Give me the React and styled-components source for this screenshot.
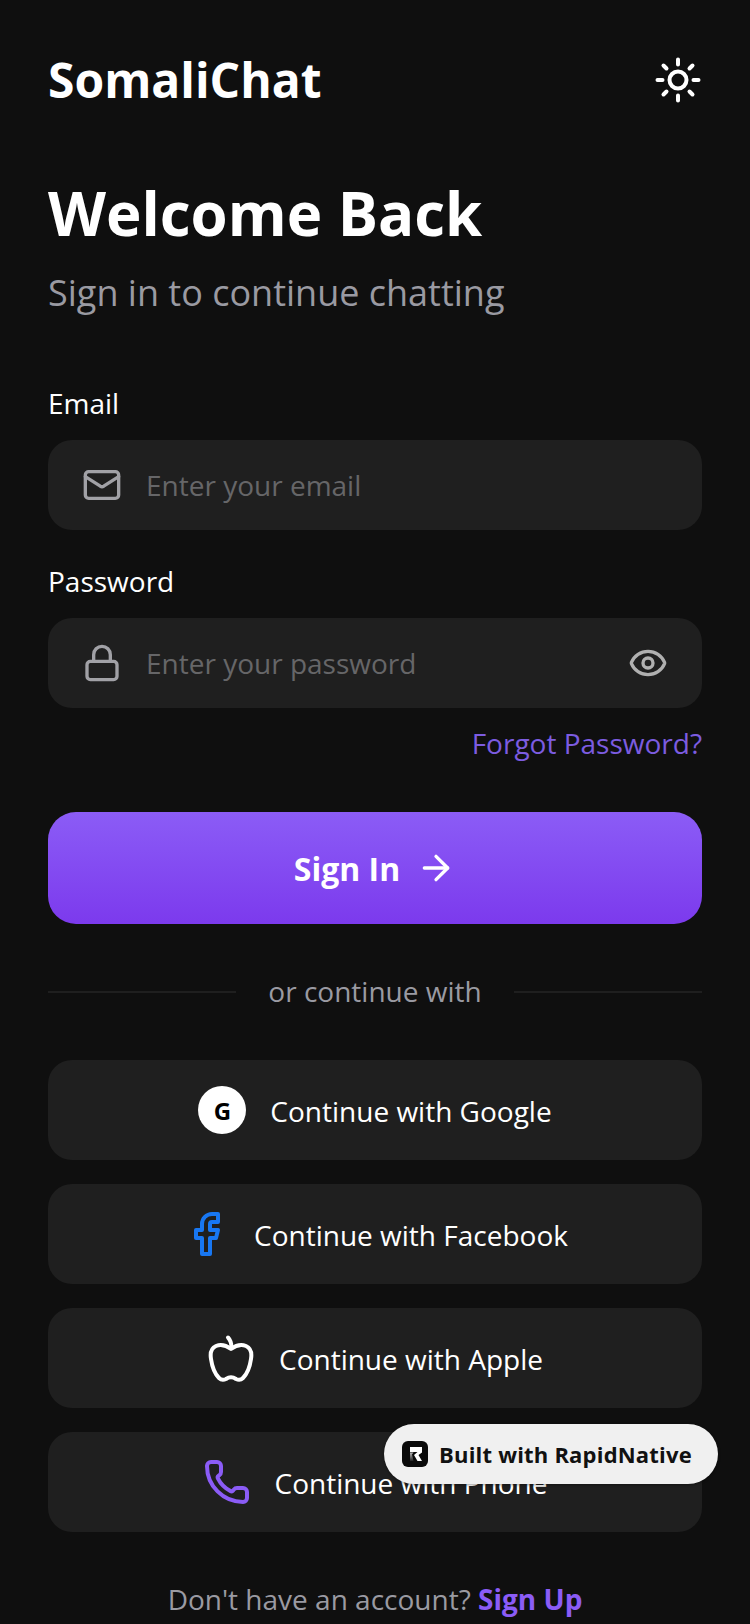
import React from 'react';
import styled, { createGlobalStyle } from 'styled-components';
import { Mail, Lock, Eye, ArrowRight, Facebook, Phone } from 'lucide-react';

const GlobalStyle = createGlobalStyle`
  html, body {
    margin: 0;
    padding: 0;
    background: #0f0f0f;
    font-family: "Open Sans", "Liberation Sans", sans-serif;
  }
  * { box-sizing: border-box; }
`;

const Screen = styled.div`
  position: relative;
  width: 750px;
  height: 1624px;
  overflow: hidden;
  padding: 48px 48px 0;
  background: #0f0f0f;
  color: #fff;
`;

const Header = styled.header`
  display: flex;
  align-items: center;
  justify-content: space-between;
  height: 64px;
  margin-bottom: 63px;
`;

const Logo = styled.div`
  font-size: 48px;
  line-height: 64px;
  font-weight: 700;
`;

const ThemeToggle = styled.button`
  display: flex;
  padding: 0;
  border: 0;
  background: none;
  color: #fff;
`;

const Title = styled.h1`
  margin: 0;
  font-size: 60px;
  line-height: 76px;
  font-weight: 700;
`;

const Subtitle = styled.p`
  margin: 18px 0 67px;
  font-size: 36px;
  line-height: 48px;
  color: #9a9aa2;
`;

const Label = styled.label`
  display: block;
  margin-bottom: 18px;
  font-size: 28px;
  line-height: 38px;
`;

const Field = styled.div`
  display: flex;
  align-items: center;
  gap: 24px;
  height: 90px;
  margin-bottom: 32px;
  padding: 0 34px;
  border-radius: 24px;
  background: #1f1f1f;
  color: #a1a1a6;
`;

const Input = styled.input`
  flex: 1;
  min-width: 0;
  padding: 0;
  border: 0;
  outline: 0;
  background: none;
  font: inherit;
  font-size: 28px;
  color: #fff;

  &::placeholder {
    color: #666668;
    opacity: 1;
  }
`;

const ForgotLink = styled.a`
  display: block;
  margin-top: -16px;
  font-size: 28px;
  line-height: 38px;
  text-align: right;
  color: #7c5ce0;
`;

const SignInButton = styled.button`
  display: flex;
  align-items: center;
  justify-content: center;
  gap: 16px;
  width: 100%;
  height: 112px;
  margin-top: 50px;
  border: 0;
  border-radius: 28px;
  background: linear-gradient(180deg, #8b5cf6, #7c3aed);
  font: inherit;
  font-size: 32px;
  font-weight: 700;
  color: #fff;
`;

const Divider = styled.div`
  display: flex;
  align-items: center;
  gap: 32px;
  margin: 48px 0 50px;
  font-size: 28px;
  line-height: 38px;
  color: #9a9aa2;

  &::before, &::after {
    content: "";
    flex: 1;
    height: 2px;
    margin-top: 2px;
    background: #1f1f1f;
  }
`;

const SocialList = styled.div`
  display: flex;
  flex-direction: column;
  gap: 24px;
`;

const SocialButton = styled.button`
  display: flex;
  align-items: center;
  justify-content: center;
  gap: 24px;
  width: 100%;
  height: 100px;
  padding: 0;
  border: 0;
  border-radius: 24px;
  background: #1f1f1f;
  font: inherit;
  font-size: 28px;
  color: #fff;
`;

const SocialLabel = styled.span`
  margin-top: 2px;
`;

const GoogleMark = styled.span`
  display: flex;
  align-items: center;
  justify-content: center;
  width: 48px;
  height: 48px;
  border-radius: 50%;
  background: #fff;
  font-size: 24px;
  font-weight: 700;
  color: #000;
`;

const Footer = styled.p`
  margin: 48px 0 0;
  font-size: 28px;
  line-height: 38px;
  text-align: center;
  color: #9a9aa2;
`;

const SignUp = styled.a`
  font-weight: 700;
  color: #8b5cf6;
`;

const Badge = styled.div`
  position: absolute;
  left: 384px;
  top: 1424px;
  display: flex;
  align-items: center;
  gap: 11px;
  width: 334px;
  height: 60px;
  padding: 0 18px;
  border-radius: 30px;
  background: #f0f0f0;
  box-shadow: 0 1px 3px rgba(0, 0, 0, 0.4);
  font-size: 22px;
  letter-spacing: 0.2px;
  font-weight: 700;
  color: #111;
`;

const SunIcon = () => (
  <svg width="48" height="48" viewBox="0 0 48 48" fill="none" stroke="currentColor" strokeWidth="4" strokeLinecap="round">
    <circle cx="24" cy="24" r="8.5" />
    <path d="M24 3.5v5M24 39.5v5M3.5 24h5M39.5 24h5M9.5 9.5l3 3M35.5 35.5l3 3M9.5 38.5l3-3M35.5 12.5l3-3" />
  </svg>
);

const RapidLogo = () => (
  <svg width="26" height="26" viewBox="0 0 26 26">
    <defs>
      <linearGradient id="rapidFade" x1="0" y1="0" x2="0" y2="1">
        <stop offset="0" stopColor="#bbb" />
        <stop offset="1" stopColor="#222" />
      </linearGradient>
    </defs>
    <rect width="26" height="26" rx="6" fill="#0a0a0a" />
    <path d="M8 6h12v5.500l-3.500 2.500 3.500 6h-4.500l-3.500-6 3.500-3H8z" fill="#fff" />
    <path d="M8 11.500h3.500l-1.500 2 1.500 6.500H8z" fill="url(#rapidFade)" />
  </svg>
);

const AppleIcon = () => (
  <svg width="48" height="48" viewBox="0 0 48 48" fill="none" stroke="#fff" strokeWidth="4" strokeLinecap="round" strokeLinejoin="round">
    <path d="M24 15C20 12 14 10 9 12C4.500 14 3 19 4 25C5 32 8 40 12 44C14 46 17 46 19 45C22 43 26 43 29 45C31 46 34 46 36 44C40 40 43 32 44 25C45 19 43.500 14 39 12C34 10 28 12 24 15Z" />
    <path d="M24.500 14C24.500 9 23.500 6 21 3.500" />
  </svg>
);

const socials = [
  { label: 'Continue with Google', icon: <GoogleMark>G</GoogleMark> },
  { label: 'Continue with Facebook', icon: <Facebook size={48} color="#1877f2" /> },
  { label: 'Continue with Apple', icon: <AppleIcon /> },
  { label: 'Continue with Phone', icon: <Phone size={48} color="#8b5cf6" /> },
];

export default function App() {
  return (
    <>
      <GlobalStyle />
      <Screen>
        <Header>
          <Logo>SomaliChat</Logo>
          <ThemeToggle><SunIcon /></ThemeToggle>
        </Header>

        <Title>Welcome Back</Title>
        <Subtitle>Sign in to continue chatting</Subtitle>

        <Label>Email</Label>
        <Field>
          <Mail size={40} />
          <Input placeholder="Enter your email" />
        </Field>

        <Label>Password</Label>
        <Field>
          <Lock size={40} />
          <Input placeholder="Enter your password" />
          <Eye size={40} color="#b0b0b0" />
        </Field>
        <ForgotLink>Forgot Password?</ForgotLink>

        <SignInButton>
          Sign In
          <ArrowRight size={40} />
        </SignInButton>

        <Divider>or continue with</Divider>

        <SocialList>
          {socials.map(item => (
            <SocialButton key={item.label}>
              {item.icon}
              <SocialLabel>{item.label}</SocialLabel>
            </SocialButton>
          ))}
        </SocialList>

        <Footer>
          Don't have an account? <SignUp>Sign Up</SignUp>
        </Footer>

        <Badge>
          <RapidLogo />
          Built with RapidNative
        </Badge>
      </Screen>
    </>
  );
}
